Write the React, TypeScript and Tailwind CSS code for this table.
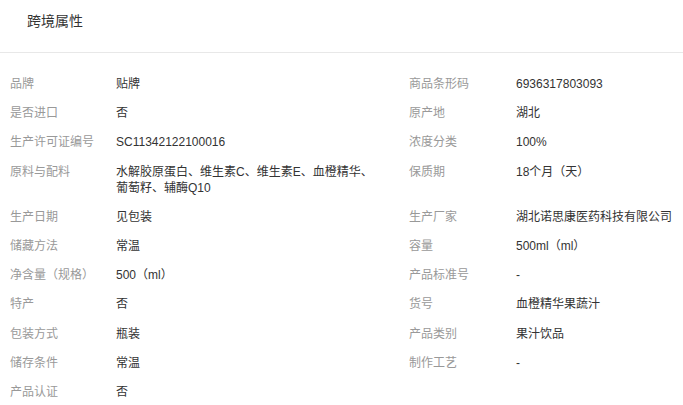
const left: [string, string][] = [
  ["品牌", "贴牌"],
  ["是否进口", "否"],
  ["生产许可证编号", "SC11342122100016"],
  ["原料与配料", "水解胶原蛋白、维生素C、维生素E、血橙精华、葡萄籽、辅酶Q10"],
  ["生产日期", "见包装"],
  ["储藏方法", "常温"],
  ["净含量（规格）", "500（ml）"],
  ["特产", "否"],
  ["包装方式", "瓶装"],
  ["储存条件", "常温"],
  ["产品认证", "否"],
];

const right: [string, string][] = [
  ["商品条形码", "6936317803093"],
  ["原产地", "湖北"],
  ["浓度分类", "100%"],
  ["保质期", "18个月（天）"],
  ["生产厂家", "湖北诺思康医药科技有限公司"],
  ["容量", "500ml（ml）"],
  ["产品标准号", "-"],
  ["货号", "血橙精华果蔬汁"],
  ["产品类别", "果汁饮品"],
  ["制作工艺", "-"],
];

function Attr({ label, value, side }: { label: string; value: string; side: "l" | "r" }) {
  return (
    <div className="flex items-start mb-[13.2px] text-[12px] leading-4">
      <div className={`${side === "l" ? "w-[106px]" : "w-[107px]"} shrink-0 text-[#999]`}>{label}</div>
      <div className={`${side === "l" ? "w-[262px]" : "flex-1 min-w-0"} text-[#333]`}>{value}</div>
    </div>
  );
}

export default function App() {
  const cells: JSX.Element[] = [];
  left.forEach((l, i) => {
    cells.push(<Attr key={`l${i}`} label={l[0]} value={l[1]} side="l" />);
    if (right[i]) cells.push(<Attr key={`r${i}`} label={right[i][0]} value={right[i][1]} side="r" />);
  });

  return (
    <div
      className="min-h-screen bg-white overflow-hidden"
      style={{ fontFamily: '"Liberation Sans", "Noto Sans CJK SC", sans-serif' }}
    >
      {/* Header */}
      <div className="h-[53px] border-b border-[#e8e8e8] pl-[27px] pt-[11px]">
        <h2 className="text-[14px] leading-5 text-[#333]">跨境属性</h2>
      </div>

      {/* Attribute grid */}
      <div className="grid grid-cols-[399px_1fr] pl-[10px] pt-[23px]">{cells}</div>
    </div>
  );
}
